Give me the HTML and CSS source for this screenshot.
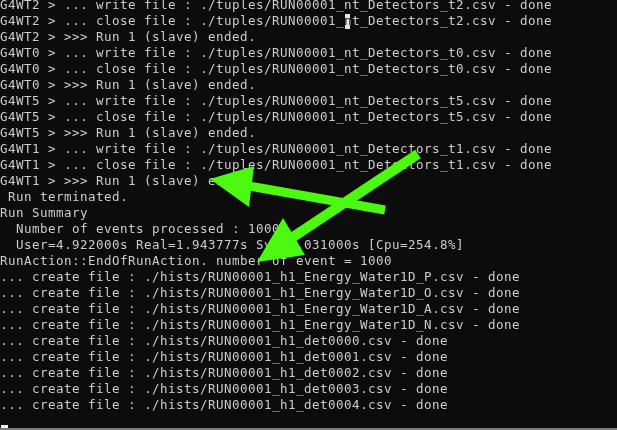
FILE: index.html
```html
<!DOCTYPE html>
<html>
<head>
<meta charset="utf-8">
<link rel="stylesheet" href="styles.css">
</head>
<body>
<div class="console">
<pre class="log">G4WT2 &gt; ... write file : ./tuples/RUN00001_nt_Detectors_t2.csv - done
G4WT2 &gt; ... close file : ./tuples/RUN00001_<span class="caret">n</span>t_Detectors_t2.csv - done
G4WT2 &gt; &gt;&gt;&gt; Run 1 (slave) ended.
G4WT0 &gt; ... write file : ./tuples/RUN00001_nt_Detectors_t0.csv - done
G4WT0 &gt; ... close file : ./tuples/RUN00001_nt_Detectors_t0.csv - done
G4WT0 &gt; &gt;&gt;&gt; Run 1 (slave) ended.
G4WT5 &gt; ... write file : ./tuples/RUN00001_nt_Detectors_t5.csv - done
G4WT5 &gt; ... close file : ./tuples/RUN00001_nt_Detectors_t5.csv - done
G4WT5 &gt; &gt;&gt;&gt; Run 1 (slave) ended.
G4WT1 &gt; ... write file : ./tuples/RUN00001_nt_Detectors_t1.csv - done
G4WT1 &gt; ... close file : ./tuples/RUN00001_nt_Detectors_t1.csv - done
G4WT1 &gt; &gt;&gt;&gt; Run 1 (slave) ended.
 Run terminated.
Run Summary
  Number of events processed : 1000
  User=4.922000s Real=1.943777s Sys=0.031000s [Cpu=254.8%]
RunAction::EndOfRunAction. number of event = 1000
... create file : ./hists/RUN00001_h1_Energy_Water1D_P.csv - done
... create file : ./hists/RUN00001_h1_Energy_Water1D_O.csv - done
... create file : ./hists/RUN00001_h1_Energy_Water1D_A.csv - done
... create file : ./hists/RUN00001_h1_Energy_Water1D_N.csv - done
... create file : ./hists/RUN00001_h1_det0000.csv - done
... create file : ./hists/RUN00001_h1_det0001.csv - done
... create file : ./hists/RUN00001_h1_det0002.csv - done
... create file : ./hists/RUN00001_h1_det0003.csv - done
... create file : ./hists/RUN00001_h1_det0004.csv - done
<span class="cursor"></span></pre>
<svg class="arrows" width="617" height="430" viewBox="0 0 617 430">
  <line x1="385" y1="210" x2="246" y2="185.5" stroke="#4cfa10" stroke-width="9"/>
  <polygon points="210,179 254,166 249,207" fill="#4cfa10"/>
  <line x1="418" y1="154" x2="290" y2="239" stroke="#4cfa10" stroke-width="10"/>
  <polygon points="257,262 283,218 305,255" fill="#4cfa10"/>
</svg>
</div>
<div class="statusbar"></div>
</body>
</html>
```

FILE: styles.css
```css
html, body {
  margin: 0;
  padding: 0;
  width: 617px;
  height: 430px;
  overflow: hidden;
  background: #0c0c0c;
}
body {
  display: flex;
  flex-direction: column;
}
.console {
  position: relative;
  flex: 1;
  overflow: hidden;
}
.log {
  margin: -3px 0 0 0;
  padding: 0;
  font-family: "DejaVu Sans Mono", "Liberation Mono", monospace;
  font-size: 12.5px;
  letter-spacing: 0.475px;
  line-height: 16px;
  color: #cccccc;
  white-space: pre;
}
.caret {
  position: relative;
}
.caret::before {
  content: "";
  position: absolute;
  left: 1px;
  top: 1px;
  width: 5px;
  height: 15px;
  background: #f2f2f2;
  mix-blend-mode: difference;
}
.cursor {
  display: inline-block;
  width: 7px;
  height: 3px;
  background: #f2f2f2;
  vertical-align: -3px;
  margin-left: 1px;
}
.arrows {
  position: absolute;
  left: 0;
  top: 0;
}
.statusbar {
  height: 2px;
  background: #7a7a7a;
}
```
